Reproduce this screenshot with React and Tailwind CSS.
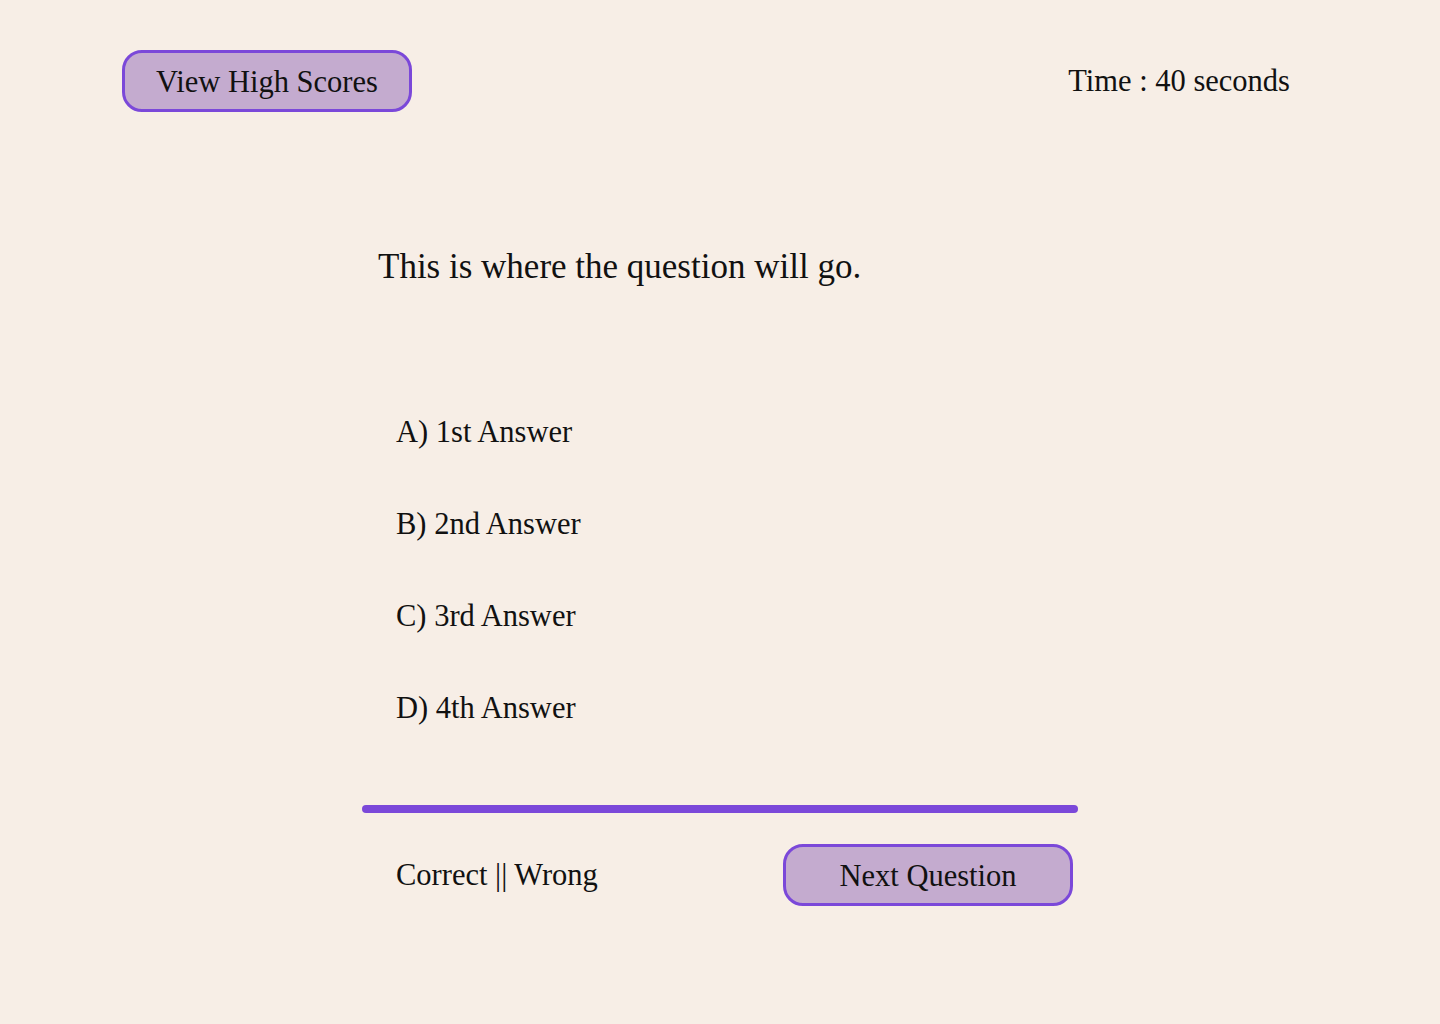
import React from 'react'

const answers = ['A) 1st Answer', 'B) 2nd Answer', 'C) 3rd Answer', 'D) 4th Answer']

export default function App(){
  return (
    <div className="min-h-[1024px] bg-[#f7eee6] text-[#111] font-['Liberation_Serif',serif]">
      <header className="flex items-center justify-between pl-[122px] pr-[150px] pt-[50px]">
        <button className="w-[290px] h-[62px] rounded-[20px] border-[3px] border-[#7b48d9] bg-[#c4abcf] text-[30.5px] leading-none pt-[2px]">
          View High Scores
        </button>
        <div className="text-[30.5px] pt-[2px]">Time : 40 seconds</div>
      </header>

      <main className="w-[716px] mx-auto mt-[137px]">
        <h1 className="pl-4 text-[35px] leading-none">This is where the question will go.</h1>

        <ul className="mt-[133px] pl-[34px] flex flex-col gap-[62px]">
          {answers.map(a => (
            <li key={a} className="text-[30.5px] leading-[30px] cursor-pointer">{a}</li>
          ))}
        </ul>

        <div className="mt-[82px] h-[8px] rounded-full bg-[#7b48d9]" />

        <div className="mt-[31px] flex items-center justify-between pl-[34px] pr-[5px]">
          <span className="text-[30.5px] pt-[2px]">Correct || Wrong</span>
          <button className="w-[290px] h-[62px] rounded-[20px] border-[3px] border-[#7b48d9] bg-[#c4abcf] text-[30.5px] leading-none pt-[2px]">
            Next Question
          </button>
        </div>
      </main>
    </div>
  )
}
